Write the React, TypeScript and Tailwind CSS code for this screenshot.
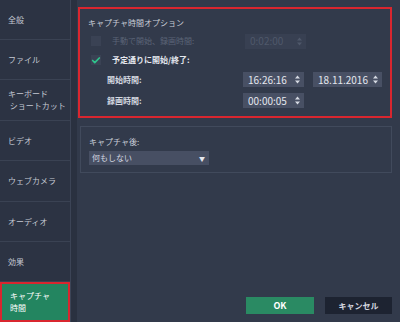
import { Check } from 'lucide-react';

const NAV = [
  { key: 'general', label: ['全般'], h: 'h-[40px]' },
  { key: 'file', label: ['ファイル'], h: 'h-[40px]' },
  { key: 'keys', label: ['キーボード', '\u00a0ショートカット'], h: 'h-[41px]' },
  { key: 'video', label: ['ビデオ'], h: 'h-[40px]' },
  { key: 'webcam', label: ['ウェブカメラ'], h: 'h-[41px]' },
  { key: 'audio', label: ['オーディオ'], h: 'h-[40px]' },
  { key: 'effects', label: ['効果'], h: 'h-[40px]' },
];

function Spinner({ value, width, disabled }: { value: string; width: string; disabled?: boolean }) {
  return (
    <div
      className={`${width} h-[15px] flex items-center justify-between pl-[5px] pr-[4px] ${
        disabled ? 'bg-[#384052] text-[#4f586a]' : 'bg-[#485064] text-[#e4e7ee]'
      }`}
    >
      <span className="text-[10px] leading-none">{value}</span>
      <svg width="5" height="9" viewBox="0 0 5 9" className={disabled ? 'text-[#4f586a]' : 'text-[#d6dae3]'}>
        <path d="M0 3.5 L2.5 0.5 L5 3.5 Z M0 5.5 L2.5 8.5 L5 5.5 Z" fill="currentColor" />
      </svg>
    </div>
  );
}

export default function App() {
  return (
    <div
      className="w-[400px] h-[322px] flex bg-[#323a4b] overflow-hidden"
      style={{ fontFamily: '"Noto Sans CJK JP", "Noto Sans", sans-serif' }}
    >
      {/* Sidebar */}
      <div className="w-[72px] flex flex-col bg-[#2c3343] border-r border-[#3c4456]">
        {NAV.map((n) => (
          <div
            key={n.key}
            className={`${n.h} flex flex-col justify-center pl-[8px] border-b border-[#3a4253] text-[8px] leading-[12px] text-[#c4c9d3]`}
          >
            {n.label.map((l) => (
              <span key={l}>{l}</span>
            ))}
          </div>
        ))}
        <div className="flex-1 flex flex-col justify-center pl-[8px] bg-[#238560] border-2 border-[#d9262f] text-[8px] leading-[12px] text-white">
          <span>キャプチャ</span>
          <span>時間</span>
        </div>
      </div>
      <div className="w-[6px] bg-[#2a3140]" />

      {/* Main */}
      <div className="flex-1 flex flex-col pl-[1px] pr-[8px] pt-[7px] pb-[8px]">
        <div className="h-[111px] border-2 border-[#d9262f] px-[8px] pt-[8px] flex flex-col">
          <div className="text-[8px] leading-[12px] text-[#c9ced8]">キャプチャ時間オプション</div>
          <div className="flex items-center mt-[5px] h-[14px]">
            <div className="w-[10px] h-[10px] ml-[3px] bg-[#3a4254]" />
            <span className="ml-[11px] text-[8px] text-[#5b6477] w-[133px]">手動で開始、録画時間:</span>
            <Spinner value="0:02:00" width="w-[61px]" disabled />
          </div>
          <div className="flex items-center mt-[5px] h-[14px]">
            <div className="w-[10px] h-[10px] ml-[3px] bg-[#3a4254] flex items-center justify-center">
              <Check className="w-[11px] h-[11px] text-[#2fc48c]" strokeWidth={4} />
            </div>
            <span className="ml-[11px] text-[8px] font-bold text-[#e4e7ee]">予定通りに開始/終了:</span>
          </div>
          <div className="flex items-center mt-[5px] h-[15px]">
            <span className="ml-[19px] text-[8px] font-bold text-[#d5d9e1] w-[136px]">開始時間:</span>
            <Spinner value="16:26:16" width="w-[61px]" />
            <div className="w-[9px]" />
            <Spinner value="18.11.2016" width="w-[69px]" />
          </div>
          <div className="flex items-center mt-[6px] h-[15px]">
            <span className="ml-[19px] text-[8px] font-bold text-[#d5d9e1] w-[136px]">録画時間:</span>
            <Spinner value="00:00:05" width="w-[61px]" />
          </div>
        </div>

        <div className="mt-[8px] ml-[2px] h-[47px] border border-[#414a5c] px-[8px] pt-[9px]">
          <div className="text-[8px] leading-[12px] text-[#c9ced8]">キャプチャ後:</div>
          <div className="mt-[3px] w-[120px] h-[14px] bg-[#474f63] flex items-center justify-between pl-[3px] pr-[4px]">
            <span className="text-[8px] text-[#d5d9e1]">何もしない</span>
            <span className="text-[6px] text-[#e4e7ee]">▼</span>
          </div>
        </div>

        <div className="flex-1" />
        <div className="flex justify-end gap-[11px]">
          <button className="w-[68px] h-[17px] bg-[#2a8a63] text-white text-[9px] font-bold flex items-center justify-center">
            OK
          </button>
          <button className="w-[67px] h-[17px] bg-[#1d2331] text-[#d5d9e1] text-[8px] font-bold flex items-center justify-center">
            キャンセル
          </button>
        </div>
      </div>
    </div>
  );
}
